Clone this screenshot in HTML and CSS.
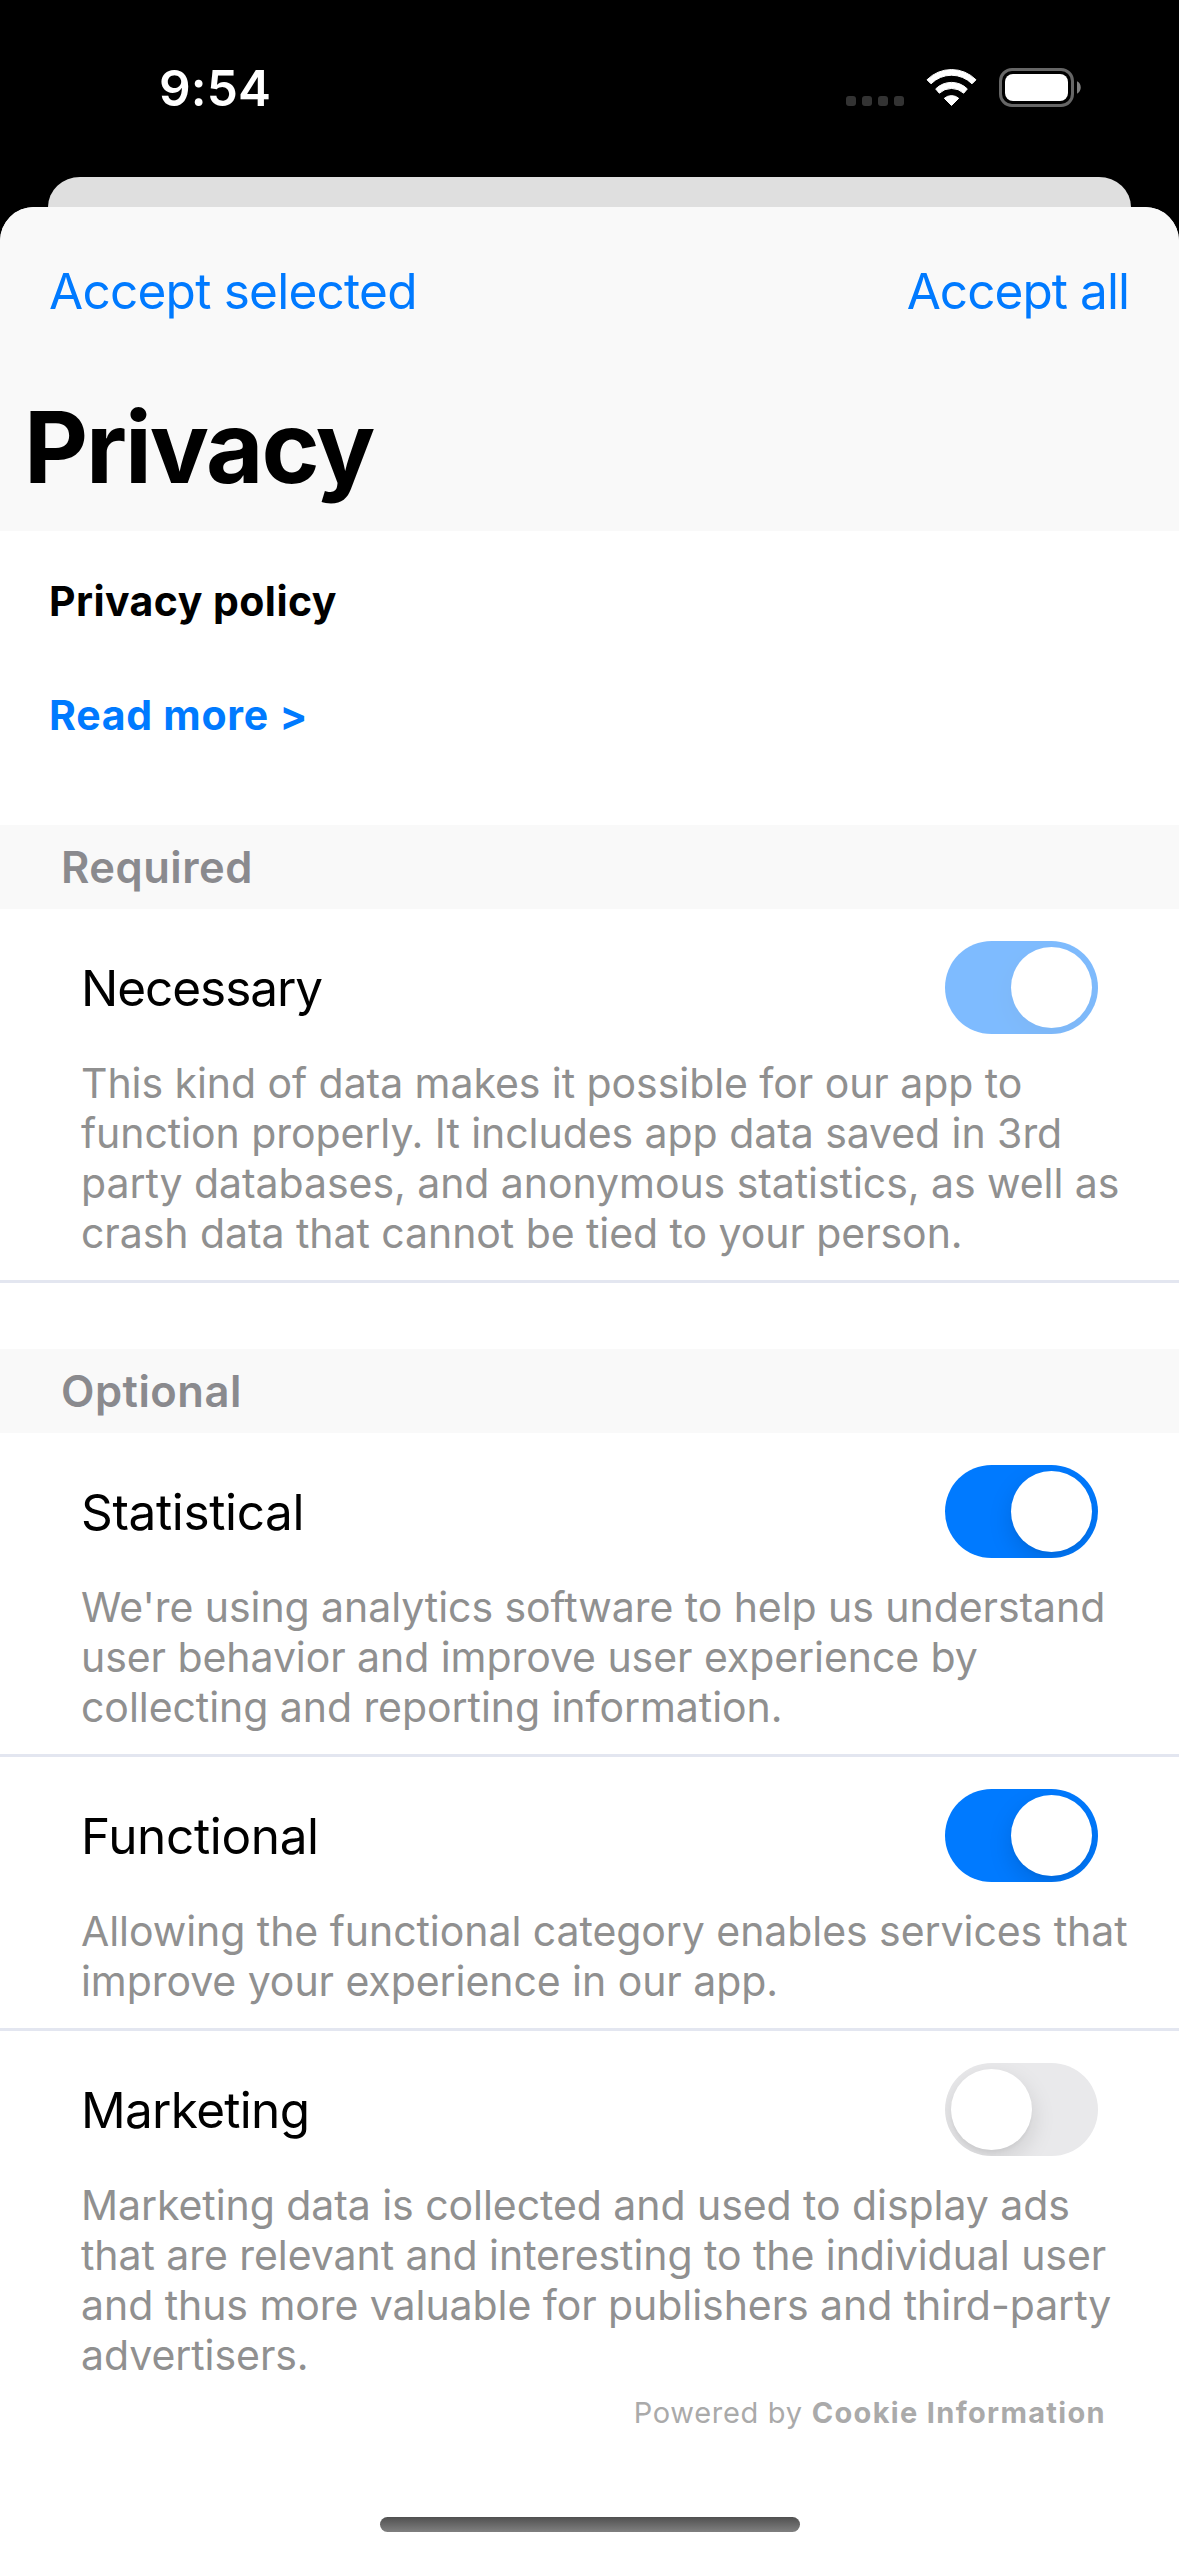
FILE: index.html
```html
<!DOCTYPE html>
<html lang="en">
<head>
<meta charset="utf-8">
<title>Privacy</title>
<link rel="stylesheet" href="styles.css">
</head>
<body>
<div class="status-bar">
  <span class="time">9:54</span>
  <div class="status-icons">
    <svg class="cellular" width="58" height="39" viewBox="0 0 58 39" fill="#333">
      <rect x="0" y="28" width="10" height="10" rx="3"/>
      <rect x="16" y="28" width="10" height="10" rx="3"/>
      <rect x="32" y="28" width="10" height="10" rx="3"/>
      <rect x="48" y="28" width="10" height="10" rx="3"/>
    </svg>
    <svg class="wifi" width="51" height="39" viewBox="0 0 51 39" fill="#fff" stroke="#fff" stroke-width="1" stroke-linejoin="round">
      <path d="M1 11.8A34.4 34.4 0 0 1 50 11.8L46 15.8A28.8 28.8 0 0 0 5 15.8Z"/>
      <path d="M9.7 20.9A22.4 22.4 0 0 1 41.3 20.9L37.7 25.2A18 18 0 0 0 13.3 25.2Z"/>
      <path d="M18.3 30.3A11 11 0 0 1 32.7 30.3L25.5 37.5Z"/>
    </svg>
    <svg class="battery" width="83" height="39" viewBox="0 0 83 39">
      <rect x="1.5" y="1.5" width="72" height="36" rx="11.5" fill="none" stroke="#666" stroke-width="3"/>
      <rect x="6" y="6" width="63" height="27" rx="8" fill="#fff"/>
      <path d="M78 13.3C83 15.5 83 23.5 78 25.7Z" fill="#808080"/>
    </svg>
  </div>
</div>
<div class="back-sheet"></div>
<main class="sheet">
  <header class="header">
    <nav class="actions">
      <a class="action">Accept selected</a>
      <a class="action action-all">Accept all</a>
    </nav>
    <h1 class="title">Privacy</h1>
  </header>
  <section class="intro">
    <p class="policy">Privacy policy</p>
    <a class="read-more">Read more &gt;</a>
  </section>

  <h2 class="band">Required</h2>
  <section class="group">
    <article class="item">
      <div class="item-row">
        <span class="label label-tight">Necessary</span>
        <span class="toggle on disabled"><span class="thumb"></span></span>
      </div>
      <p class="desc">This kind of data makes it possible for our app to function properly. It includes app data saved in 3rd party databases, and anonymous statistics, as well as crash data that cannot be tied to your person.</p>
    </article>
  </section>

  <h2 class="band band-next">Optional</h2>
  <section class="group">
    <article class="item">
      <div class="item-row">
        <span class="label">Statistical</span>
        <span class="toggle on"><span class="thumb"></span></span>
      </div>
      <p class="desc">We're using analytics software to help us understand user behavior and improve user experience by collecting and reporting information.</p>
    </article>
    <article class="item">
      <div class="item-row">
        <span class="label">Functional</span>
        <span class="toggle on"><span class="thumb"></span></span>
      </div>
      <p class="desc">Allowing the functional category enables services that improve your experience in our app.</p>
    </article>
    <article class="item item-last">
      <div class="item-row">
        <span class="label label-snug">Marketing</span>
        <span class="toggle"><span class="thumb"></span></span>
      </div>
      <p class="desc">Marketing data is collected and used to display ads that are relevant and interesting to the individual user and thus more valuable for publishers and third-party advertisers.</p>
    </article>
  </section>
  <footer class="footer">
    <span class="powered">Powered by</span>
    <strong class="brand">Cookie Information</strong>
  </footer>
  <div class="home-indicator"></div>
</main>
</body>
</html>
```

FILE: styles.css
```css
* { box-sizing: border-box; margin: 0; padding: 0; }

body {
  width: 1179px;
  height: 2556px;
  overflow: hidden;
  background: #000;
  color: #000;
  font-family: Inter, "Liberation Sans", sans-serif;
  display: flex;
  flex-direction: column;
}

/* Status bar */
.status-bar {
  flex: none;
  display: flex;
  justify-content: space-between;
  align-items: flex-start;
  height: 177px;
  padding: 58px 97px 0 159px;
}
.time {
  color: #fff;
  font-size: 49.5px;
  font-weight: 600;
  line-height: 60px;
  letter-spacing: 0.1px;
}
.status-icons {
  display: flex;
  align-items: center;
  height: 59px;
  gap: 22px;
}
.cellular, .wifi, .battery { display: block; }

/* Sheets */
.back-sheet {
  flex: none;
  height: 30px;
  margin: 0 48px;
  background: #dfdfdf;
  border-radius: 32px 32px 0 0 / 30px 30px 0 0;
}
.sheet {
  flex: 1;
  display: flex;
  flex-direction: column;
  background: #fff;
  border-radius: 34px 34px 0 0;
  overflow: hidden;
}
.header {
  background: #f9f9f9;
  padding: 54px 50px 24px 49px;
}
.actions {
  display: flex;
  justify-content: space-between;
  margin-bottom: 66px;
}
.action {
  color: #007aff;
  font-size: 49.5px;
  line-height: 60px;
  letter-spacing: -0.75px;
}
.action-all { letter-spacing: -0.94px; }
.title {
  margin-left: -25px;
  font-size: 99px;
  font-weight: 700;
  line-height: 120px;
  letter-spacing: -2.1px;
}
.intro {
  display: flex;
  flex-direction: column;
  gap: 64px;
  padding: 45px 49px 85px;
  font-size: 41px;
  font-weight: 700;
  line-height: 50px;
}
.policy { letter-spacing: 0.44px; }
.read-more { color: #007aff; letter-spacing: 0.74px; }

/* Section headings */
.band {
  height: 84px;
  padding-left: 61px;
  background: #f9f9f9;
  color: #8a8a8e;
  font-size: 43.5px;
  font-weight: 600;
  line-height: 84px;
  letter-spacing: 0.5px;
}
.band-next { margin-top: 66px; }

/* Consent items */
.item {
  padding: 32px 48px 22px 81px;
  border-bottom: 3px solid #e3e6f0;
}
.item-last { padding-bottom: 0; border-bottom: 0; }
.item-row {
  display: flex;
  justify-content: space-between;
  align-items: center;
  height: 93px;
  padding-right: 33px;
  margin-bottom: 24px;
}
.label {
  font-size: 49.5px;
  line-height: 60px;
  letter-spacing: -0.35px;
}
.label-snug { letter-spacing: -0.7px; }
.label-tight { letter-spacing: -1.05px; }
.desc {
  color: #909090;
  font-size: 41px;
  line-height: 50px;
  letter-spacing: -0.06px;
}

.toggle {
  display: flex;
  width: 153px;
  height: 93px;
  padding: 6px;
  border-radius: 47px;
  background: #e9e9eb;
  overflow: hidden;
}
.toggle.on { justify-content: flex-end; background: #007aff; }
.toggle.disabled { opacity: 0.5; }
.toggle.disabled .thumb { box-shadow: 0 9px 24px rgba(0, 0, 0, 0.08); }
.thumb {
  width: 81px;
  height: 81px;
  border-radius: 50%;
  background: #fff;
  box-shadow: 0 9px 24px rgba(0, 0, 0, 0.13), 0 3px 3px rgba(0, 0, 0, 0.03);
}

/* Footer */
.footer {
  display: flex;
  justify-content: flex-end;
  gap: 9px;
  margin-top: 15px;
  padding-right: 73px;
  color: #aaa;
  font-size: 29px;
  line-height: 36px;
}
.powered { letter-spacing: 0.69px; }
.brand { font-weight: 700; letter-spacing: 1.33px; }
.home-indicator {
  width: 420px;
  height: 15px;
  margin: 86px auto 0;
  border-radius: 8px;
  background: linear-gradient(#505050, #808080);
}
```
